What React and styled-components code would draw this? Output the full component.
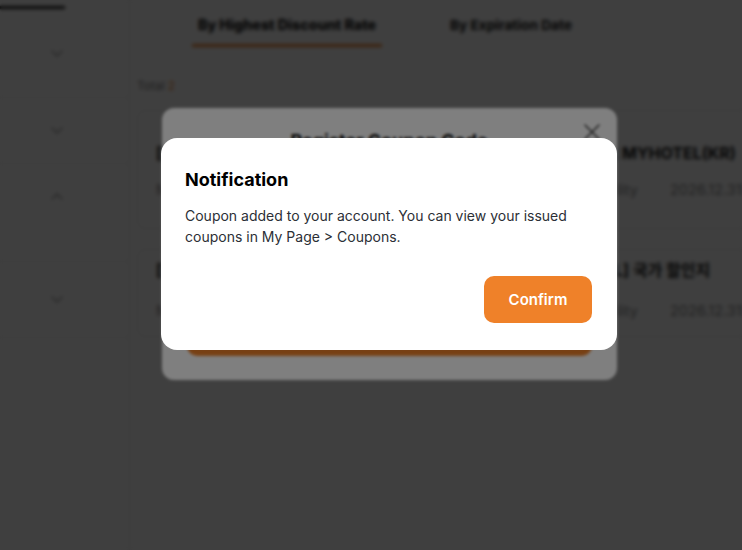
import React from 'react';
import styled, { createGlobalStyle } from 'styled-components';

const GlobalStyle = createGlobalStyle`
  html, body {
    margin: 0;
    padding: 0;
    background: #fff;
    overflow: hidden;
  }
  body {
    font-family: Inter, "Noto Sans CJK KR", sans-serif;
    color: #111;
  }
`;

const Page = styled.div`
  display: flex;
  width: 742px;
  height: 550px;
  overflow: hidden;
`;

const Sidebar = styled.aside`
  width: 130px;
  flex-shrink: 0;
  border-right: 1px solid #e4e4e4;
  box-sizing: border-box;
`;

const TopTab = styled.div`
  width: 65px;
  height: 6px;
  border-bottom: 3px solid #1a1a1a;
`;

const SideRow = styled.div`
  height: ${props => props.h}px;
  display: flex;
  align-items: center;
  justify-content: flex-end;
  padding-right: 66px;
  border-bottom: ${props => (props.line ? '1px solid #ececec' : 'none')};
  box-sizing: border-box;
`;

const Main = styled.main`
  flex: 1;
  min-width: 0;
  padding-left: 7px;
`;

const Tabs = styled.div`
  display: flex;
  gap: 34px;
  margin-left: 55px;
`;

const Tab = styled.div`
  width: 190px;
  padding: 15px 0 9px;
  line-height: 20px;
  text-align: center;
  font-size: ${props => (props.active ? '14.3px' : '13.7px')};
  font-weight: ${props => (props.active ? 800 : 700)};
  color: #111;
  white-space: nowrap;
  border-bottom: 3px solid ${props => (props.active ? '#ef8129' : 'transparent')};
`;

const Total = styled.div`
  margin-top: 30px;
  font-size: 12px;
  line-height: 18px;
  color: #777;

  span {
    color: #ef8129;
    margin-left: 3px;
  }
`;

const CardList = styled.div`
  display: flex;
  flex-direction: column;
  gap: 20px;
  margin-top: 15px;
  width: 660px;
`;

const Card = styled.div`
  border: 1px solid #e8e8e8;
  border-radius: 8px;
  padding: ${props => props.pt}px 18px ${props => props.pb}px;
  display: flex;
  flex-direction: column;
  gap: ${props => props.gap}px;
`;

const CardTitle = styled.div`
  font-size: 16px;
  font-weight: 700;
  line-height: 20px;
  white-space: nowrap;
  color: #111;
`;

const CardMeta = styled.div`
  display: grid;
  grid-template-columns: 482px auto;
  column-gap: 32px;
  font-size: 14.5px;
  line-height: 20px;
  color: #888;
  white-space: nowrap;
`;

const MetaInfo = styled.div`
  display: flex;
  justify-content: space-between;
`;

const Overlay = styled.div`
  position: fixed;
  inset: 0;
  background: rgba(0, 0, 0, 0.5);
  backdrop-filter: blur(${props => props.blur}px);
  display: flex;
  align-items: center;
  justify-content: center;
  padding: 0 0 62px 36px;
  box-sizing: border-box;
`;

const RegisterModal = styled.div`
  width: 455px;
  height: 272px;
  background: #fff;
  border-radius: 12px;
  padding: 20px 25px 24px;
  box-sizing: border-box;
  display: flex;
  flex-direction: column;
`;

const RegisterHead = styled.div`
  position: relative;
  text-align: center;
  font-size: 18px;
  font-weight: 700;
  line-height: 26px;
`;

const CloseButton = styled.button`
  position: absolute;
  right: -9px;
  top: -5px;
  width: 18px;
  height: 18px;
  border: 0;
  padding: 0;
  background: none;
`;

const CodeInput = styled.div`
  margin-top: 30px;
  height: 46px;
  border: 1px solid #ddd;
  border-radius: 8px;
`;

const WideButton = styled.div`
  margin-top: auto;
  height: 48px;
  border-radius: 10px;
  background: #ef8129;
`;

const NoticeModal = styled.div`
  width: 456px;
  background: #fff;
  border-radius: 16px;
  padding: 29px 25px 27px 24px;
  box-sizing: border-box;
  display: flex;
  flex-direction: column;
`;

const NoticeTitle = styled.h2`
  margin: 0;
  font-size: 18px;
  font-weight: 700;
  line-height: 26px;
  color: #000;
`;

const NoticeText = styled.p`
  margin: 12px 0 0;
  font-size: 14px;
  line-height: 21px;
  color: #2c2f36;
`;

const Actions = styled.div`
  display: flex;
  justify-content: flex-end;
  margin-top: 29px;
`;

const ConfirmButton = styled.button`
  width: 108px;
  height: 47px;
  border: 0;
  border-radius: 10px;
  background: #ef8129;
  color: #fff;
  font-family: Inter, sans-serif;
  font-size: 15px;
  font-weight: 600;
`;

const Chevron = ({ up }) => (
  <svg width="12" height="7" viewBox="0 0 12 7" fill="none">
    <polyline
      points={up ? '1,6 6,1 11,6' : '1,1 6,6 11,1'}
      stroke="#9a9a9a"
      strokeWidth="1.5"
      strokeLinecap="round"
      strokeLinejoin="round"
    />
  </svg>
);

const coupons = [
  {
    title: '[Member Exclusive] 15% Off Room Rates Special Coupon at MYHOTEL(KR)',
    pt: 32,
    pb: 28,
    gap: 17
  },
  {
    title: '[Welcome Gift] 10% Off Hotels Stays Nationwide [MYHOTEL] 국가 할인지',
    pt: 10,
    pb: 15,
    gap: 21
  }
];

function App() {
  return (
    <>
      <GlobalStyle />
      <Page>
        <Sidebar>
          <TopTab />
          <SideRow h={89} line>
            <Chevron />
          </SideRow>
          <SideRow h={66} line>
            <Chevron />
          </SideRow>
          <SideRow h={64}>
            <Chevron up />
          </SideRow>
          <SideRow h={34} line />
          <SideRow h={76} line>
            <Chevron />
          </SideRow>
        </Sidebar>
        <Main>
          <Tabs>
            <Tab active>By Highest Discount Rate</Tab>
            <Tab>By Expiration Date</Tab>
          </Tabs>
          <Total>
            Total<span>2</span>
          </Total>
          <CardList>
            {coupons.map((item, index) => (
              <Card key={index} pt={item.pt} pb={item.pb} gap={item.gap}>
                <CardTitle>{item.title}</CardTitle>
                <CardMeta>
                  <MetaInfo>
                    <span>Minimum order ₩100,000</span>
                    <span>Availability</span>
                  </MetaInfo>
                  <span>2026.12.31 23:59</span>
                </CardMeta>
              </Card>
            ))}
          </CardList>
        </Main>
      </Page>

      <Overlay blur={1.5}>
        <RegisterModal>
          <RegisterHead>
            Register Coupon Code
            <CloseButton aria-label="Close">
              <svg width="18" height="18" viewBox="0 0 18 18" fill="none">
                <path d="M2 2L16 16M16 2L2 16" stroke="#444" strokeWidth="1.6" strokeLinecap="round" />
              </svg>
            </CloseButton>
          </RegisterHead>
          <CodeInput />
          <WideButton />
        </RegisterModal>
      </Overlay>

      <Overlay blur={1.5}>
        <NoticeModal>
          <NoticeTitle>Notification</NoticeTitle>
          <NoticeText>
            Coupon added to your account. You can view your issued coupons in My Page &gt; Coupons.
          </NoticeText>
          <Actions>
            <ConfirmButton>Confirm</ConfirmButton>
          </Actions>
        </NoticeModal>
      </Overlay>
    </>
  );
}

export default App;
